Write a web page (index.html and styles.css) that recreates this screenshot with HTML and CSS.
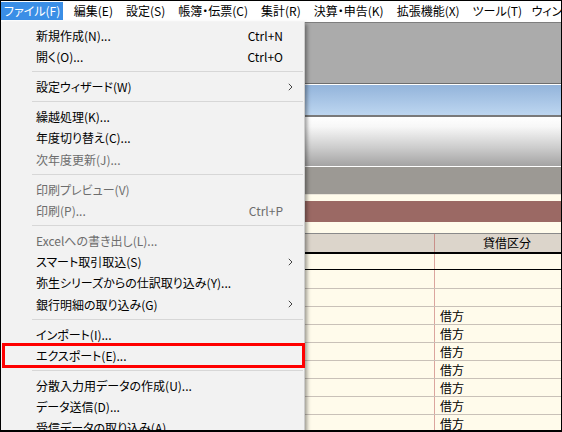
FILE: index.html
```html
<!DOCTYPE html>
<html lang="ja">
<head>
<meta charset="utf-8">
<title>メニュー</title>
<link rel="stylesheet" href="styles.css">
</head>
<body>
<div class="screen">
  <div class="menubar">
    <div class="mb-item active">ファイル(F)</div>
    <div class="mb-item">編集(E)</div>
    <div class="mb-item">設定(S)</div>
    <div class="mb-item">帳簿・伝票(C)</div>
    <div class="mb-item">集計(R)</div>
    <div class="mb-item">決算・申告(K)</div>
    <div class="mb-item">拡張機能(X)</div>
    <div class="mb-item tight">ツール(T)</div>
    <div class="mb-item">ウィンドウ(W)</div>
  </div>
  <div class="workspace">
    <div class="band-gray"></div>
    <div class="band-blue"></div>
    <div class="band-silver"></div>
    <div class="band-stone"></div>
    <div class="band-cream-thin"></div>
    <div class="band-maroon"></div>
    <div class="band-cream"></div>
    <div class="grid">
      <div class="grid-head"><div class="c1"></div><div class="c2">貸借区分</div></div>
      <div class="row row0"><div class="c1"></div><div class="c2"></div></div>
      <div class="row first"><div class="c1"></div><div class="c2"></div></div>
      <div class="row"><div class="c1"></div><div class="c2"></div></div>
      <div class="row"><div class="c1"></div><div class="c2">借方</div></div>
      <div class="row"><div class="c1"></div><div class="c2">借方</div></div>
      <div class="row"><div class="c1"></div><div class="c2">借方</div></div>
      <div class="row"><div class="c1"></div><div class="c2">借方</div></div>
      <div class="row"><div class="c1"></div><div class="c2">借方</div></div>
      <div class="row"><div class="c1"></div><div class="c2">借方</div></div>
      <div class="row"><div class="c1"></div><div class="c2">借方</div></div>
    </div>
  </div>

  <div class="dropdown">
    <div class="mi"><span class="lbl">新規作成(N)...</span><span class="sc">Ctrl+N</span><span class="sub"></span></div>
    <div class="mi"><span class="lbl">開く(O)...</span><span class="sc">Ctrl+O</span><span class="sub"></span></div>
    <div class="sep"></div>
    <div class="mi"><span class="lbl">設定ウィザード(W)</span><span class="sub"><svg class="chev" width="5" height="8" viewBox="0 0 5 8"><polyline points="0.8,0.8 4,4 0.8,7.2" fill="none" stroke="#444" stroke-width="1"/></svg></span></div>
    <div class="sep"></div>
    <div class="mi"><span class="lbl">繰越処理(K)...</span><span class="sub"></span></div>
    <div class="mi"><span class="lbl">年度切り替え(C)...</span><span class="sub"></span></div>
    <div class="mi dis"><span class="lbl">次年度更新(J)...</span><span class="sub"></span></div>
    <div class="sep"></div>
    <div class="mi dis"><span class="lbl">印刷プレビュー(V)</span><span class="sub"></span></div>
    <div class="mi dis"><span class="lbl">印刷(P)...</span><span class="sc">Ctrl+P</span><span class="sub"></span></div>
    <div class="sep"></div>
    <div class="mi dis"><span class="lbl">Excelへの書き出し(L)...</span><span class="sub"></span></div>
    <div class="mi"><span class="lbl">スマート取引取込(S)</span><span class="sub"><svg class="chev" width="5" height="8" viewBox="0 0 5 8"><polyline points="0.8,0.8 4,4 0.8,7.2" fill="none" stroke="#444" stroke-width="1"/></svg></span></div>
    <div class="mi"><span class="lbl">弥生シリーズからの仕訳取り込み(Y)...</span><span class="sub"></span></div>
    <div class="mi"><span class="lbl">銀行明細の取り込み(G)</span><span class="sub"><svg class="chev" width="5" height="8" viewBox="0 0 5 8"><polyline points="0.8,0.8 4,4 0.8,7.2" fill="none" stroke="#444" stroke-width="1"/></svg></span></div>
    <div class="sep"></div>
    <div class="mi"><span class="lbl">インポート(I)...</span><span class="sub"></span></div>
    <div class="mi"><span class="lbl">エクスポート(E)...</span><span class="sub"></span></div>
    <div class="sep"></div>
    <div class="mi"><span class="lbl">分散入力用データの作成(U)...</span><span class="sub"></span></div>
    <div class="mi"><span class="lbl">データ送信(D)...</span><span class="sub"></span></div>
    <div class="mi"><span class="lbl">受信データの取り込み(A)</span><span class="sub"></span></div>
  </div>

  <div class="annot"></div>
</div>
</body>
</html>
```

FILE: styles.css
```css
* { box-sizing: border-box; }
html, body { margin: 0; padding: 0; background: #fff; }
body {
  font-family: "Noto Sans CJK JP", "Noto Sans", sans-serif;
  font-size: 12px;
  font-feature-settings: "palt";
  color: #000;
}
.screen {
  position: relative;
  width: 562px;
  height: 432px;
  border-style: solid;
  border-color: #000;
  border-width: 1px 1px 2px 1px;
  overflow: hidden;
  background: #fff;
}

/* menubar */
.menubar {
  display: flex;
  height: 21px;
  padding-top: 1px;
  background: #fff;
  white-space: nowrap;
}
.mb-item {
  height: 18px;
  line-height: 18px;
  padding: 0 6.5px;
}
.mb-item.active {
  background: #3a8ee6;
  color: #fff;
  padding: 0 3px;
  margin-right: 4px;
}
.mb-item.tight { padding-right: 3px; }

/* workspace bands */
.band-gray {
  height: 62px;
  background: #ababab;
  border-top: 1px solid #7e7e7e;
  border-bottom: 1px solid #6e6e6e;
}
.band-blue {
  height: 31px;
  border-top: 1px solid #fff;
  background: linear-gradient(#93b4db, #bdd6f0);
}
.band-silver {
  height: 51px;
  border-top: 2px solid #7a7a7a;
  background: linear-gradient(#ffffff 0%, #f7f7f7 20%, #cdcdcd 62%, #a4a3a3 100%);
}
.band-stone {
  height: 28px;
  border-top: 1px solid #fff;
  background: #9c9994;
}
.band-cream-thin {
  height: 7px;
  background: #fffbeb;
  border-top: 1px solid #ebe6da;
}
.band-maroon {
  height: 21px;
  background: #9b6964;
}
.band-cream {
  height: 11px;
  background: #fffbeb;
}

/* grid */
.grid-head, .row {
  display: grid;
  grid-template-columns: 433px 1fr;
}
.grid-head {
  height: 19px;
  border-top: 1px solid #8a8a8a;
  background: #dcd5cb;
  line-height: 18px;
}
.grid-head .c2 {
  border-left: 1px solid #c98f89;
  padding-left: 48px;
}
.row {
  height: 18px;
  background: #fffbeb;
  border-bottom: 1px solid #c9c1b8;
  line-height: 17px;
}
.row.row0 {
  border-top: 2px solid #000;
  border-bottom: 1px solid #000;
}
.row.first { height: 19px; }
.row .c2 {
  border-left: 1px solid #dba59e;
  padding-left: 5px;
}

/* dropdown menu */
.dropdown {
  position: absolute;
  left: 0;
  top: 21px;
  width: 304px;
  height: 430px;
  padding-top: 3px;
  background: #f2f2f2;
  border-right: 1px solid #cdcdcd;
  box-shadow: 2px 2px 4px rgba(0, 0, 0, 0.4);
  white-space: nowrap;
}
.mi {
  display: flex;
  align-items: center;
  height: 21.33px;
  padding-left: 35px;
}
.mi .lbl { flex: 1; }
.mi .sc { text-align: right; }
.mi .sub {
  width: 21px;
  display: flex;
  align-items: center;
  padding-left: 5px;
}
.mi.dis { color: #6d6d6d; }
.chev { display: block; }
.sep {
  height: 8.5px;
  display: flex;
  align-items: center;
  padding-left: 31px;
  padding-right: 1px;
}
.sep::after {
  content: "";
  flex: 1;
  height: 1px;
  background: #d7d7d7;
}

/* annotation */
.annot {
  position: absolute;
  left: 1px;
  top: 341.5px;
  width: 303px;
  height: 25px;
  border: 3px solid #ff0000;
}
```
